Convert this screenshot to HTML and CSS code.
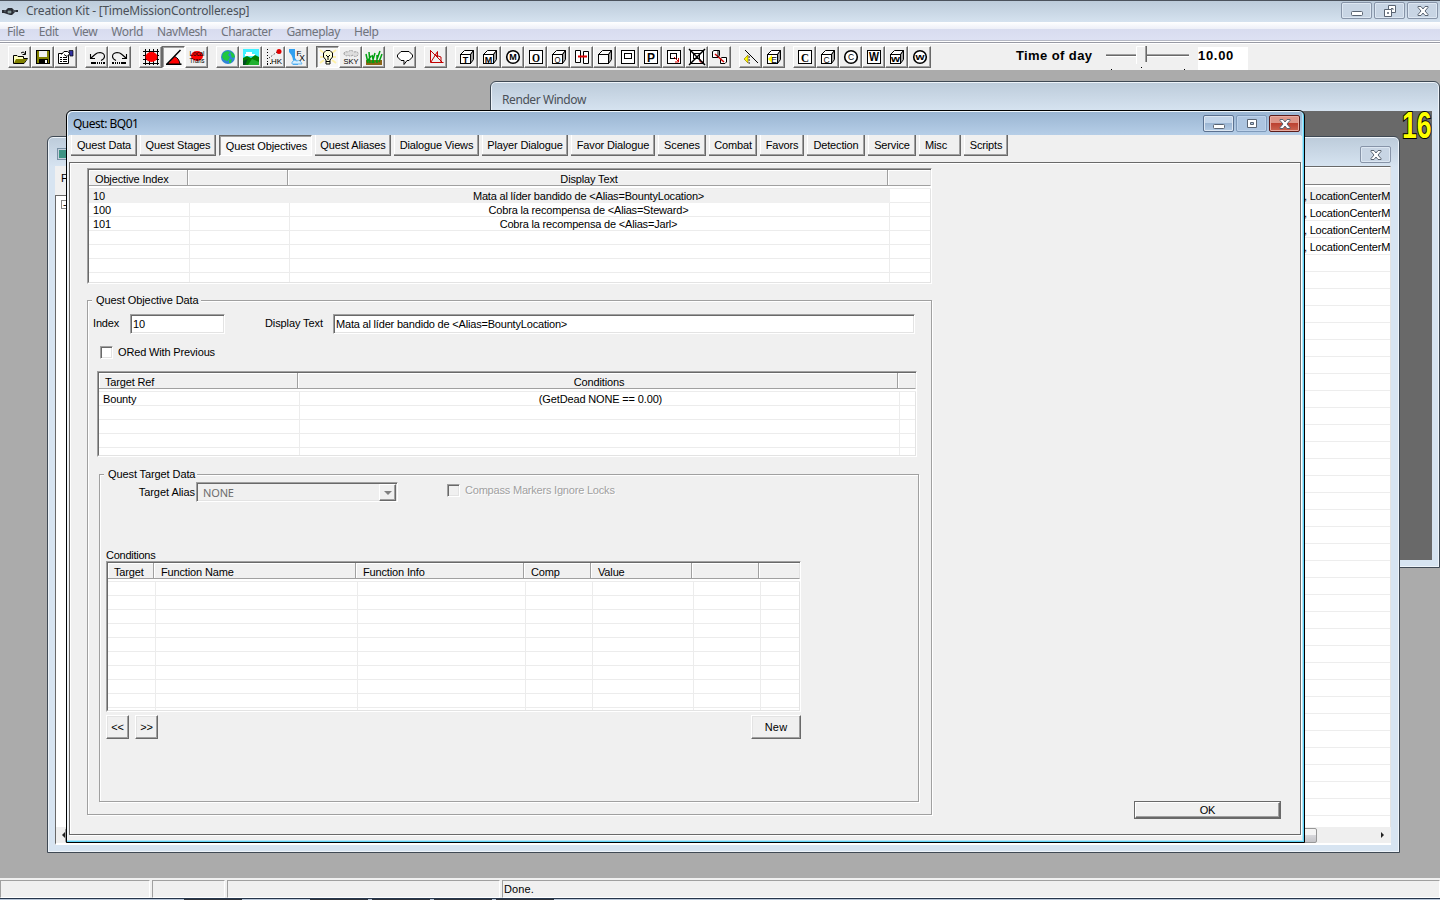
FILE: index.html
```html
<!DOCTYPE html>
<html lang="en">

<head>
    <meta charset="utf-8">
    <title>Creation Kit</title>
    <link rel="stylesheet" href="styles.css">
</head>

<body>
    <svg class="defs" width="0" height="0">
        <symbol id="cube" viewBox="0 0 16 16">
            <path d="M1.5 5.5L5.5 1.5H14.5L11.5 5.5Z" fill="#fff" stroke="#000" />
            <path d="M11.5 5.5L14.5 1.5V10.5L11.5 14.5Z" fill="#a0a0a0" stroke="#000" />
            <rect x="1.5" y="5.5" width="10" height="9" fill="#fff" stroke="#000" />
        </symbol>
        <symbol id="square" viewBox="0 0 16 16">
            <rect x="1.5" y="1.5" width="13" height="13" fill="#fff" stroke="#000" />
        </symbol>
        <symbol id="circle" viewBox="0 0 16 16">
            <circle cx="8" cy="8" r="6.3" fill="#fff" stroke="#000" stroke-width="1.6" />
        </symbol>
        <symbol id="cross" viewBox="0 0 12 10">
            <path d="M1 .5H4L6 3L8 .5H11V1.5L8 5L11 8.5V9.5H8L6 7L4 9.5H1V8.5L4 5L1 1.5Z" fill="#fff" stroke="#5a6472" />
        </symbol>
        <symbol id="minimize" viewBox="0 0 12 10">
            <rect x=".5" y="5.5" width="11" height="4" rx="1" fill="#fff" stroke="#5a6472" />
        </symbol>
        <symbol id="maximize" viewBox="0 0 12 10">
            <path d="M1.5 .5H10.5V8.5H1.5ZM4.500 3.500V5.500H7.500V3.500Z" fill="#fff" fill-rule="evenodd" stroke="#5a6472" />
        </symbol>
        <symbol id="restore" viewBox="0 0 12 12">
            <path d="M4.500 .5H11.5V7.500H4.500Z" fill="#fff" stroke="#5a6472" />
            <path d="M7 3.500H9V5" fill="none" stroke="#5a6472" />
            <path d="M.5 4.500H7.500V11.5H.5ZM3.500 7.500V8.500H4.500V7.500Z" fill="#fff" fill-rule="evenodd" stroke="#5a6472" />
        </symbol>
    </svg>

    <header class="app-title">
        <svg class="app-icon" viewBox="0 0 16 10">
            <path d="M0 3H4L6 1H10L12 3H16V5H13L10 8H8L5 7L2 6H0Z" fill="#2b2f36" />
            <path d="M6 4H9V6H6ZM2 4H4M11 4H14" fill="#7f9a8c" stroke="#8c98a4" stroke-width=".6" />
        </svg>
        <span class="app-name">Creation Kit - [TimeMissionController.esp]</span>
        <div class="caption-buttons">
            <span class="caption-button"><svg width="12" height="10"><use href="#minimize" /></svg></span>
            <span class="caption-button"><svg width="12" height="12"><use href="#restore" /></svg></span>
            <span class="caption-button"><svg width="12" height="10"><use href="#cross" /></svg></span>
        </div>
    </header>

    <nav class="menu">
        <span>File</span><span>Edit</span><span>View</span><span>World</span><span>NavMesh</span><span>Character</span><span>Gameplay</span><span>Help</span>
    </nav>

    <div class="toolbar">
        <div class="tool-group">
            <span class="tool"><svg viewBox="0 0 16 16"><path d="M1.500 14.500V6.500H5L6 7.500H11.500V9.500H15.500L12 14.500Z" fill="#ffffc0" stroke="#000" /><path d="M4 10H15L12 14H2Z" fill="#808000" /><path d="M9 4Q11 1.500 13.500 5M13.500 2V5.500H10.500" fill="none" stroke="#000" /></svg></span>
            <span class="tool"><svg viewBox="0 0 16 16"><rect x="1.500" y="1.500" width="13" height="13" fill="#808000" stroke="#000" /><rect x="4" y="2" width="8" height="6" fill="#f0f0f0" /><rect x="4" y="10" width="9" height="4" fill="#000" /><rect x="10" y="11" width="2" height="3" fill="#fff" /></svg></span>
            <span class="tool"><svg viewBox="0 0 16 16"><path d="M.5 4.500H10.500V14.500H.5Z" fill="#fff" stroke="#000" /><path d="M2 8.500H4M5 8.500H9M2 10.500H4M5 10.500H9M2 12.500H4M5 12.500H9" stroke="#000" /><path d="M3.500 5.500L6 2.500H9.500L12 4.500L9 7.500L6 5.500" fill="#fff" stroke="#000" /><path d="M11 1.500H15V7H12Z" fill="#3030a0" stroke="#000" stroke-width=".7" /></svg></span>
        </div>
        <div class="tool-group">
            <span class="tool"><svg viewBox="0 0 16 16"><path d="M1.500 5V9.500H6M1.500 9.500L6 5.500Q8 3.500 11 3.500Q15.500 4 15.500 7.500Q15.500 10 12 11.500" fill="none" stroke="#000" stroke-width="1.100" /><path d="M2 14H7M8 14H9M10 14H11M12 14H13M14 14H16" stroke="#000" stroke-width="2" /></svg></span>
            <span class="tool"><svg viewBox="0 0 16 16"><path d="M14.500 5V9.500H10M14.500 9.500L10 5.500Q8 3.500 5 3.500Q.5 4 .5 7.500Q.5 10 4 11.500" fill="none" stroke="#000" stroke-width="1.100" /><path d="M0 14H2M3 14H4M5 14H6M7 14H8M9 14H14" stroke="#000" stroke-width="2" /></svg></span>
        </div>
        <div class="tool-group">
            <span class="tool"><svg viewBox="0 0 16 16"><path d="M2.500 0V16M6.500 0V16M10.500 0V16M14.500 0V16M0 2.500H16M0 6.500H16M0 10.500H16M0 14.500H16" stroke="#000" /><ellipse cx="8.500" cy="8" rx="6" ry="5" fill="#f00" /></svg></span>
            <span class="tool pressed"><svg viewBox="0 0 16 16"><path d="M2 15L8.500 7.500Q13 9 14 15Z" fill="#f00" /><path d="M8.500 7.500Q13 9 14 15" fill="none" stroke="#000" /><path d="M0 15.300H15.500M1 15L14.500 1" stroke="#000" stroke-width="1.500" /></svg></span>
            <span class="tool"><svg viewBox="0 0 16 16"><ellipse cx="8" cy="7" rx="6" ry="5" fill="#f00" /><text x="8" y="6.500" class="tiny" textLength="15" lengthAdjust="spacingAndGlyphs">Local</text><text x="8" y="14" class="tiny" textLength="15" lengthAdjust="spacingAndGlyphs">Trans</text></svg></span>
        </div>
        <div class="tool-group">
            <span class="tool"><svg viewBox="0 0 16 16"><circle cx="8" cy="8" r="7" fill="#2f84d8" /><path d="M3 4L7 2L10 3L8 6L10 8L8 12L4 11L2 8ZM10 2L14 5L15 8L12 9L11 6ZM9 11L12 10L11 14H9Z" fill="#20c840" /></svg></span>
            <span class="tool"><svg viewBox="0 0 16 16"><rect width="16" height="16" fill="#40f0ff" /><path d="M3 3H9V5H12V7H2V5H3Z" fill="#fff" /><path d="M0 9L4 7L8 9L12 6L16 8V16H0Z" fill="#008000" /><path d="M5 16L9 10L16 13V16Z" fill="#20b030" /><path d="M0 12L5 10L2 16H0Z" fill="#004c20" /></svg></span>
            <span class="tool"><svg viewBox="0 0 16 16"><path d="M1.500 0V16M1 14.500H5M3 9L11 3" stroke="#000" stroke-dasharray="1 2" /><circle cx="13" cy="2.500" r="2.500" fill="#e00000" /><text x="10.500" y="14.500" class="small">HK</text></svg></span>
            <span class="tool"><svg viewBox="0 0 16 16"><path d="M0 0H6V9L9 13V16H4Q5 8 0 3Z" fill="#30a0f0" /><path d="M3 13Q5 10 8 12Q11 10 13 15H3Z" fill="#d8f0ff" stroke="#68b8f0" /><text x="10" y="6.500" class="small">F</text><text x="13" y="12" class="mid">X</text></svg></span>
        </div>
        <div class="tool-group">
            <span class="tool pressed"><svg viewBox="0 0 16 16"><path d="M0 1L4 4M16 1L12 4M0 14L4 11M16 14L12 11M0 8H3M16 8H13" stroke="#fff2a8" stroke-width="2" /><path d="M6 11L3.500 8V4L6 1.500H10L12.500 4V8L10 11V15H6Z" fill="#ffffd8" stroke="#000" /><path d="M6 6L8 8L10 6M8 8V11M6 12.500H10" fill="none" stroke="#000" /></svg></span>
            <span class="tool"><svg viewBox="0 0 16 16"><path d="M1 5Q1 2 5 3Q8 0 11 3Q16 2 15 6Q12 9 10 6Q7 8 5 6Q3 8 1 5Z" fill="#ddd" stroke="#999" stroke-dasharray="2 1" /><text x="8" y="15" class="small" textLength="15" lengthAdjust="spacingAndGlyphs">SKY</text></svg></span>
            <span class="tool"><svg viewBox="0 0 16 16"><path d="M0 11H16V16H0Z" fill="#8c6418" /><path d="M2 14L0 5M4 14L3 3M6 14L9 4M8 14L6 6M10 13L14 2M11 14L11 6M13 13L16 5M1 13L5 7" stroke="#00a010" stroke-width="1.500" /></svg></span>
        </div>
        <div class="tool-group">
            <span class="tool"><svg viewBox="0 0 16 16"><path d="M4 2.500H12L15.500 6V8L12 11.500H10L7 15.500V11.500H4L.5 8V6Z" fill="#fff" stroke="#000" /></svg></span>
        </div>
        <div class="tool-group">
            <span class="tool"><svg viewBox="0 0 16 16"><path d="M2.500 1V13.500H15.500M3 2L14 13M3 13L9.500 2.500V8.500M6 5.500L13 8V13" fill="none" stroke="#c00000" /></svg></span>
        </div>
        <div class="tool-group">
            <span class="tool"><svg viewBox="0 0 16 16"><use href="#cube" /><text x="6.500" y="13.500" class="bold">T</text></svg></span>
            <span class="tool"><svg viewBox="0 0 16 16"><use href="#cube" /><text x="6.500" y="13.500" class="bold">M</text></svg></span>
            <span class="tool"><svg viewBox="0 0 16 16"><use href="#circle" /><text x="8" y="11" class="bold">M</text></svg></span>
            <span class="tool"><svg viewBox="0 0 16 16"><use href="#square" /><text x="8" y="12.500" class="serif" textLength="8" lengthAdjust="spacingAndGlyphs">O</text></svg></span>
            <span class="tool"><svg viewBox="0 0 16 16"><use href="#cube" /><text x="6.500" y="13.500" class="mid" textLength="6" lengthAdjust="spacingAndGlyphs">O</text></svg></span>
            <span class="tool"><svg viewBox="0 0 16 16"><path d="M1.500 1.500H6.500V13.500H1.500ZM9.500 2.500H14.500V14.500H9.500Z" fill="#fff" stroke="#000" /><path d="M4 7.500H13" stroke="#e00000" stroke-width="2" /></svg></span>
            <span class="tool"><svg viewBox="0 0 16 16"><use href="#cube" /></svg></span>
            <span class="tool"><svg viewBox="0 0 16 16"><use href="#square" /><rect x="4.500" y="4.500" width="7" height="5" fill="#fff" stroke="#000" /></svg></span>
            <span class="tool"><svg viewBox="0 0 16 16"><use href="#square" /><text x="8" y="12.500" class="letter">P</text></svg></span>
            <span class="tool"><svg viewBox="0 0 16 16"><use href="#square" /><rect x="4.500" y="4.500" width="6" height="5" fill="#fff" stroke="#000" /><path d="M8 8L12 12M12.500 9V13H9" fill="none" stroke="#d00000" /></svg></span>
            <span class="tool"><svg viewBox="0 0 16 16"><use href="#square" /><rect x="4.500" y="4.500" width="6" height="5" fill="#fff" stroke="#000" /><path d="M11 10V13H14" fill="none" stroke="#d00000" /><path d="M0 0L16 16M16 0L0 16" stroke="#000" stroke-width="1.500" /></svg></span>
            <span class="tool"><svg viewBox="0 0 16 16"><path d="M.5 2.500L2 1.500H7.500V6.500L6 8.500H.5ZM8.500 9.500L10 8.500H14.500V13L13 14.500H8.500Z" fill="#fff" stroke="#000" /><path d="M3 5L12 13" stroke="#d00000" stroke-width="1.500" /><path d="M6 2V8" stroke="#000" /></svg></span>
        </div>
        <div class="tool-group">
            <span class="tool"><svg viewBox="0 0 16 16"><path d="M2 1L15 14" stroke="#000" /><path d="M1 10L5 6V14Z" fill="#ff0" stroke="#806000" stroke-width=".6" /><path d="M5.500 8H7M5.500 11H7M5.500 14H7" stroke="#000" /></svg></span>
            <span class="tool"><svg viewBox="0 0 16 16"><use href="#cube" /><path d="M2 10L6 6V14Z" fill="#ff0" /><text x="8" y="13.500" class="mid">E</text></svg></span>
        </div>
        <div class="tool-group">
            <span class="tool"><svg viewBox="0 0 16 16"><use href="#square" /><text x="8" y="12.500" class="serif" textLength="8" lengthAdjust="spacingAndGlyphs">C</text></svg></span>
            <span class="tool"><svg viewBox="0 0 16 16"><use href="#cube" /><text x="6.500" y="13.500" class="mid">C</text></svg></span>
            <span class="tool"><svg viewBox="0 0 16 16"><use href="#circle" /><text x="8" y="11" class="mid">C</text></svg></span>
            <span class="tool"><svg viewBox="0 0 16 16"><use href="#square" /><text x="8" y="12" class="letter" textLength="10" lengthAdjust="spacingAndGlyphs">W</text></svg></span>
            <span class="tool"><svg viewBox="0 0 16 16"><use href="#cube" /><text x="6.500" y="13" class="bold" textLength="9" lengthAdjust="spacingAndGlyphs">w</text></svg></span>
            <span class="tool"><svg viewBox="0 0 16 16"><use href="#circle" /><text x="8" y="10.500" class="bold" textLength="9" lengthAdjust="spacingAndGlyphs">w</text></svg></span>
        </div>
        <span class="time-label">Time of day</span>
        <svg class="slider" width="84" height="24" viewBox="0 0 84 24">
            <path d="M0 9.500H83" stroke="#696969" />
            <path d="M0 8.500H83" stroke="#a0a0a0" />
            <path d="M0 10.500H83" stroke="#fff" />
            <path d="M30 0H40V18L35 22L30 18Z" fill="#f0f0f0" />
            <path d="M30.500 18V.5H39" fill="none" stroke="#fff" />
            <path d="M39.500 0V16" stroke="#a0a0a0" />
            <path d="M40.500 0V16" stroke="#696969" />
            <path d="M5.500 23V24M78.500 23V24M35.500 21V22" stroke="#000" />
        </svg>
        <span class="time-value">10.00</span>
    </div>

    <main class="desktop">
        <section class="window render-window">
            <div class="window-title">Render Window</div>
            <div class="viewport"><span class="fps">16</span></div>
        </section>

        <section class="window object-window">
            <div class="object-title">
                <span class="object-icon"></span>
                <span class="caption-button"><svg width="12" height="10"><use href="#cross" /></svg></span>
            </div>
            <div class="object-body">
                <div class="tree-side">
                    <span class="tree-label">F</span>
                    <div class="tree"><span class="expander">-</span></div>
                </div>
                <div class="object-list">
                    <div class="object-list-header"></div>
                    <div class="object-row selected">, LocationCenterM</div>
                    <div class="object-row">, LocationCenterM</div>
                    <div class="object-row">, LocationCenterM</div>
                    <div class="object-row">, LocationCenterM</div>
                </div>
            </div>
            <div class="scrollbar">
                <span class="arrow left"></span>
                <span class="thumb"></span>
                <span class="arrow right"></span>
            </div>
        </section>

        <section class="window quest-window">
            <div class="quest-title">
                <span>Quest: BQ01</span>
                <div class="caption-buttons">
                    <span class="caption-button active"><svg width="12" height="10"><use href="#minimize" /></svg></span>
                    <span class="caption-button active dim"><svg width="12" height="10"><use href="#maximize" /></svg></span>
                    <span class="caption-button close"><svg width="12" height="10"><use href="#cross" /></svg></span>
                </div>
            </div>
            <div class="quest-client">
                <div class="tabs">
                    <span class="tab w66">Quest Data</span>
                    <span class="tab w76">Quest Stages</span>
                    <span class="tab w93 current">Quest Objectives</span>
                    <span class="tab w76">Quest Aliases</span>
                    <span class="tab w85">Dialogue Views</span>
                    <span class="tab w86">Player Dialogue</span>
                    <span class="tab w84">Favor Dialogue</span>
                    <span class="tab w48">Scenes</span>
                    <span class="tab w48">Combat</span>
                    <span class="tab w44">Favors</span>
                    <span class="tab w58">Detection</span>
                    <span class="tab w48">Service</span>
                    <span class="tab w42 start">Misc</span>
                    <span class="tab w44">Scripts</span>
                </div>
                <div class="panel">
                    <div class="objectives">
                        <div class="list objective-list">
                            <div class="list-header">
                                <span>Objective Index</span><span></span><span class="center">Display Text</span><span></span>
                            </div>
                            <div class="list-body">
                                <div class="row selected"><span>10</span><span></span><span class="center">Mata al líder bandido de &lt;Alias=BountyLocation&gt;</span><span></span></div>
                                <div class="row"><span>100</span><span></span><span class="center">Cobra la recompensa de &lt;Alias=Steward&gt;</span><span></span></div>
                                <div class="row"><span>101</span><span></span><span class="center">Cobra la recompensa de &lt;Alias=Jarl&gt;</span><span></span></div>
                            </div>
                        </div>

                        <fieldset class="objective-data">
                            <legend>Quest Objective Data</legend>
                            <div class="fields">
                                <span class="index-label">Index</span>
                                <div class="input index-input">10</div>
                                <span class="text-label">Display Text</span>
                                <div class="input text-input">Mata al líder bandido de &lt;Alias=BountyLocation&gt;</div>
                            </div>
                            <div class="check ored"><span class="box"></span>ORed With Previous</div>
                            <div class="list target-list">
                                <div class="list-header">
                                    <span>Target Ref</span><span class="center">Conditions</span><span></span>
                                </div>
                                <div class="list-body">
                                    <div class="row"><span>Bounty</span><span class="center">(GetDead NONE == 0.00)</span><span></span></div>
                                </div>
                            </div>

                            <fieldset class="target-data">
                                <legend>Quest Target Data</legend>
                                <div class="alias-row">
                                    <span class="alias-label">Target Alias</span>
                                    <div class="combo"><span>NONE</span><span class="drop"></span></div>
                                    <div class="check disabled"><span class="box"></span>Compass Markers Ignore Locks</div>
                                </div>
                                <div class="conditions-label">Conditions</div>
                                <div class="list condition-list">
                                    <div class="list-header">
                                        <span>Target</span><span>Function Name</span><span>Function Info</span><span>Comp</span><span>Value</span><span></span><span></span>
                                    </div>
                                    <div class="list-body"></div>
                                </div>
                                <div class="condition-buttons">
                                    <span class="button arrows">&lt;&lt;</span>
                                    <span class="button arrows">&gt;&gt;</span>
                                    <span class="button new">New</span>
                                </div>
                            </fieldset>
                        </fieldset>
                    </div>
                    <span class="ok"><span class="ok-face">OK</span></span>
                </div>
            </div>
        </section>
    </main>

    <footer class="status">
        <span></span><span></span><span></span><span>Done.</span>
    </footer>
    <div class="taskbar"><i></i><i></i><i></i><i></i><i></i><i></i></div>

    <script>
        // pad the lists with blank rows so the grid lines reach the bottom
        const fillRows = () => {
            document.querySelectorAll('.list').forEach(list => {
                const columns = list.querySelector('.list-header').children.length;
                const body = list.querySelector('.list-body');
                while (body.children.length < 10) {
                    const row = document.createElement('div');
                    row.setAttribute('class', 'row');
                    for (let i = 0; i < columns; i++) {
                        row.append(document.createElement('span'));
                    }
                    body.append(row);
                }
            });
        }
        fillRows();
    </script>
</body>

</html>
```

FILE: styles.css
```css
* {
    box-sizing: border-box;
}

body {
    margin: 0;
    width: 1440px;
    height: 900px;
    display: flex;
    flex-flow: column;
    background-color: #f0f0f0;
    color: #000;
    font-family: "Liberation Sans", Arial, sans-serif;
    font-size: 11px;
    line-height: 14px;
    letter-spacing: -0.15px;
    white-space: nowrap;
    overflow: hidden;
}

svg {
    display: block;
}

.defs {
    position: absolute;
}

/* main window */

.app-title {
    height: 22px;
    display: flex;
    align-items: center;
    padding: 0 2px 2px 2px;
    border-top: 1px solid #4b525c;
    background: linear-gradient(#bccbda, #d5e2ef);
    color: #4a5058;
    font-family: "Noto Sans", sans-serif;
    font-size: 12px;
}

.app-icon {
    width: 16px;
    height: 10px;
    margin-top: 2px;
}

.app-name {
    margin-left: 8px;
    letter-spacing: -0.22px;
}

.caption-buttons {
    display: flex;
    gap: 2px;
    margin-left: auto;
}

.caption-button {
    width: 31px;
    height: 17px;
    display: flex;
    justify-content: center;
    align-items: center;
    border: 1px solid #8794a8;
    border-radius: 2px;
    box-shadow: inset 0 0 0 1px #dde7f2;
    background-color: #c8d5e4;
}

.caption-button.active {
    border-color: #5b7190;
    background: linear-gradient(#c3d5ea 45%, #9cb6d3 50%, #b4cbe5);
}

.caption-button.dim {
    border-color: #7f9aba;
    background: #adc5e0;
    box-shadow: inset 0 0 0 1px #bdd2ea;
}

.caption-button.close {
    border-color: #5c1d1a;
    box-shadow: inset 0 0 0 1px #e8aca2;
    background: linear-gradient(#dd9588 45%, #bc4231 50%, #cb6552);
}

.menu {
    height: 22px;
    display: flex;
    gap: 14.1px;
    padding: 3px 7px 0;
    background: linear-gradient(#fff 0, #eef0f8 30%, #d8dcef 34%, #dde1f3 80%, #b5b8c4 82%, #b5b8c4 86%, #fff 87%, #fff 91%, #989aa4 92%, #989aa4 96%, #fff 97%);
    color: #70747c;
    font-family: "Noto Sans", sans-serif;
    font-size: 12px;
    letter-spacing: -0.41px;
}

.toolbar {
    height: 26px;
    display: flex;
    padding: 2px 0 0 8px;
}

.tool-group {
    display: flex;
    margin-right: 8px;
}

.tool {
    width: 23px;
    height: 22px;
    padding: 2px 0 0 3px;
    border: 1px solid;
    border-color: #fff #696969 #696969 #fff;
    box-shadow: inset -1px -1px #a0a0a0;
}

.tool.pressed {
    border-color: #696969 #fff #fff #696969;
    box-shadow: inset 1px 1px #a0a0a0;
    background-color: #f8f8f8;
}

.tool svg {
    width: 16px;
    height: 16px;
    overflow: visible;
}

.tool text {
    font-family: "Liberation Sans", Arial, sans-serif;
    letter-spacing: 0;
    text-anchor: middle;
}

.tool .tiny {
    font-size: 7px;
}

.tool .small {
    font-size: 8px;
}

.tool .mid {
    font-size: 8.5px;
}

.tool .bold {
    font-size: 9px;
    font-weight: 700;
}

.tool .letter {
    font-size: 12px;
    font-weight: 700;
}

.tool .serif {
    font-family: "Liberation Serif", serif;
    font-size: 13px;
    font-weight: 700;
}

.time-label {
    width: 90px;
    margin: 3px 0 0 77px;
    font-size: 13px;
    font-weight: 700;
    letter-spacing: 0.4px;
}

.time-value {
    width: 50px;
    height: 23px;
    margin: 1px 0 0 8px;
    padding-top: 2px;
    background-color: #fff;
    font-size: 13px;
    font-weight: 700;
    letter-spacing: 0.7px;
}

/* child windows */

.desktop {
    position: relative;
    height: 808px;
    background-color: #ababab;
    overflow: hidden;
}

.window {
    position: absolute;
    display: flex;
    flex-flow: column;
    border: 1px solid #3f4954;
    border-radius: 6px 6px 0 0;
    background-color: #d7e4f1;
    box-shadow: inset 0 0 0 1px #eef4fa;
}

.render-window {
    left: 490px;
    top: 11px;
    width: 950px;
    height: 487px;
    padding: 0 7px 7px;
    background: linear-gradient(#bccbda, #d7e4f1 30px);
}

.window-title {
    height: 29px;
    padding: 11px 0 0 4px;
    color: #4a5058;
    font-family: "Noto Sans", sans-serif;
    font-size: 12px;
    letter-spacing: -0.42px;
}

.viewport {
    flex: 1;
    display: flex;
    justify-content: flex-end;
    background-color: #696969;
}

.fps {
    width: 30px;
    height: 30px;
    color: #ff0;
    font-size: 36px;
    font-weight: 700;
    line-height: 30px;
    letter-spacing: 0;
    transform: scaleX(0.74);
    transform-origin: 0 0;
    -webkit-text-stroke: 2px #000;
    paint-order: stroke fill;
}

.object-window {
    left: 47px;
    top: 66px;
    width: 1353px;
    height: 717px;
    padding: 0 8px 7px 7px;
    background: linear-gradient(#bccbda, #d7e4f1 30px);
}

.object-title {
    height: 29px;
    display: flex;
    justify-content: space-between;
    padding: 9px 0 0 2px;
}

.object-icon {
    width: 12px;
    height: 12px;
    margin-top: 2px;
    border: 2px solid #c4d0dc;
    outline: 1px solid #7890a4;
    outline-offset: -1px;
    background-color: #3c9484;
}

.object-body {
    flex: 1;
    display: flex;
    min-height: 0;
    background-color: #f0f0f0;
}

.tree-side {
    width: 30px;
    display: flex;
    flex-flow: column;
}

.tree-label {
    height: 29px;
    padding: 5px 0 0 6px;
}

.tree {
    flex: 1;
    padding: 4px 0 0 5px;
    border-left: 1px solid #696969;
    border-top: 1px solid #696969;
    background-color: #fff;
}

.expander {
    display: block;
    width: 9px;
    height: 9px;
    border: 1px solid #888;
    line-height: 6px;
    padding-left: 1px;
}

.object-list {
    flex: 1;
    border-top: 1px solid #696969;
    border-right: 1px solid #e3e3e3;
    background: repeating-linear-gradient(#fff 0 16px, #ededed 16px 17px) 0 3px;
    overflow: hidden;
}

.object-list-header {
    height: 18px;
    border-top: 1px solid #fff;
    border-bottom: 1px solid #808080;
    background-color: #f0f0f0;
}

.object-row {
    height: 17px;
    padding: 3px 0 0 1219px;
    letter-spacing: -0.22px;
}

.object-row.selected {
    height: 18px;
    padding-top: 2px;
    border-top: 2px solid #fff;
    background-color: #f0f0f0;
}

.scrollbar {
    height: 18px;
    display: flex;
    align-items: center;
    border-left: 1px solid #696969;
    border-bottom: 2px solid #fff;
    background-color: #efefef;
}

.thumb {
    width: 1252px;
    height: 15px;
    border: 1px solid #979797;
    border-radius: 2px;
    background: linear-gradient(#f4f4f4 45%, #d6d6da 50%, #c4c4c8);
}

.arrow {
    width: 0;
    height: 0;
    border: 3.5px solid transparent;
}

.arrow.left {
    margin-left: 3px;
    border-right-color: #222;
}

.arrow.right {
    margin-left: 64px;
    border-left-color: #222;
}

/* quest dialog */

.quest-window {
    left: 66px;
    top: 40px;
    width: 1239px;
    height: 733px;
    padding: 0 1px 1px 2px;
    border-color: #000;
    background: linear-gradient(#99b4d1, #b7cfe8 25px, #f0f0f0 25px);
    box-shadow: inset -1px -1px #5fd2f5, inset -2px -2px #b4e6f6, inset 1px 1px #eef6fc;
}

.quest-title {
    height: 24px;
    display: flex;
    padding: 4px 3px 0 4px;
    font-family: "Noto Sans", sans-serif;
    font-size: 12px;
    line-height: 17px;
    letter-spacing: -0.5px;
}

.quest-client {
    flex: 1;
    display: flex;
    flex-flow: column;
    margin-right: 2px;
    margin-bottom: 6px;
    background-color: #f0f0f0;
}

.tabs {
    height: 27px;
    display: flex;
    gap: 3px;
    padding-left: 2px;
}

.tab {
    height: 21px;
    display: flex;
    justify-content: center;
    padding: 3px 0 0 1px;
    border: solid #696969;
    border-width: 0 1px 1px 0;
    box-shadow: inset -1px -1px #a0a0a0, inset 1px 0 #fff;
}

.tab.current {
    padding: 3px 0 0 2px;
    border: 1px solid;
    border-color: #696969 #fff #fff #696969;
    box-shadow: inset 1px 1px #a0a0a0;
    background-color: #f8f8f8;
}

.tab.start {
    justify-content: flex-start;
    padding-left: 6px;
}

.w42 { width: 42px; }
.w44 { width: 44px; }
.w48 { width: 48px; }
.w58 { width: 58px; }
.w66 { width: 66px; }
.w76 { width: 76px; }
.w84 { width: 84px; }
.w85 { width: 85px; }
.w86 { width: 86px; }
.w93 { width: 93px; }

.panel {
    flex: 1;
    display: flex;
    justify-content: space-between;
    padding: 5px 19px 15px 17px;
    border: 1px solid #696969;
    box-shadow: inset 1px 1px #fff, 1px 1px #fff;
}

.list {
    border: 1px solid;
    border-color: #a0a0a0 #fff #fff #a0a0a0;
    background-color: #fff;
    overflow: hidden;
    display: flex;
    flex-flow: column;
}

.list-header {
    flex: none;
    height: 17px;
    display: flex;
    padding-left: 1px;
    border-top: 1px solid #696969;
    background: linear-gradient(90deg, #696969 1px, #f0f0f0 1px);
}

.list-header span {
    flex: none;
    padding: 2px 6px 0 7px;
    border: solid #a0a0a0;
    border-width: 0 1px 1px 0;
    box-shadow: inset 1px 1px #fff;
}

.list-header span:first-child {
    padding-left: 6px;
}

.list-header span:last-child,
.row span:last-child {
    flex: 1;
    border-right-color: #e3e3e3;
}

.list-body {
    flex: 1;
    padding-top: 2px;
    border-left: 1px solid #696969;
    border-bottom: 1px solid #e3e3e3;
    overflow: hidden;
}

.row {
    height: 14px;
    display: flex;
    line-height: 15px;
    border-top: 1px solid #ececec;
}

.row span {
    flex: none;
    height: 14px;
    padding: 0 4px;
    border-right: 1px solid #ececec;
}

.row.selected span:not(:last-child) {
    border-color: #f0f0f0;
    background-color: #f0f0f0;
}

.list .center {
    padding-left: 6px;
    text-align: center;
}

.list-header .center {
    padding-left: 9px;
}

.objective-list {
    width: 845px;
    height: 116px;
}

.objective-list .list-header span:nth-child(1) { width: 99px; }
.objective-list .row span:nth-child(1) { width: 101px; }
.objective-list span:nth-child(2) { width: 100px; }
.objective-list span:nth-child(3) { width: 600px; }

.objective-list .row .center {
    padding-left: 2px;
    letter-spacing: -0.19px;
}

.target-list {
    width: 820px;
    height: 86px;
    margin: 12px 0 0 9px;
}

.target-list .list-header span:nth-child(1) { width: 199px; }
.target-list .row span:nth-child(1) { width: 201px; }
.target-list span:nth-child(2) { width: 600px; }

.condition-list {
    width: 695px;
    height: 151px;
    margin-left: 6px;
}

.condition-list .list-header span:nth-child(1) { width: 46px; }
.condition-list .row span:nth-child(1) { width: 48px; }
.condition-list span:nth-child(2) { width: 202px; }
.condition-list span:nth-child(3) { width: 168px; }
.condition-list span:nth-child(4) { width: 67px; }
.condition-list span:nth-child(5) { width: 101px; }
.condition-list span:nth-child(6) { width: 67px; }

fieldset {
    min-width: 0;
    margin: 0;
    padding: 0;
    border: 1px solid #a0a0a0;
    box-shadow: 1px 1px #fff, inset 1px 1px #fff;
}

legend {
    height: 14px;
    margin-left: 4px;
    padding: 0 2px 0 4px;
    background-color: #f0f0f0;
    letter-spacing: -0.1px;
}

.objective-data {
    width: 845px;
    height: 522px;
    margin-top: 9px;
}

.fields {
    display: flex;
    margin: 7px 0 0 5px;
    line-height: 19px;
}

.input {
    height: 20px;
    padding-left: 1px;
    border: 1px solid;
    border-color: #a0a0a0 #fff #fff #a0a0a0;
    box-shadow: inset 1px 1px #696969, inset -1px -1px #e3e3e3;
    background-color: #fff;
    text-indent: 1px;
}

.index-label { width: 37px; }
.index-input { width: 95px; }
.text-label { width: 68px; margin-left: 40px; letter-spacing: -0.1px; }
.text-input { width: 582px; letter-spacing: -0.19px; }

.check {
    display: flex;
    align-items: center;
    gap: 5px;
}

.box {
    width: 13px;
    height: 13px;
    border: 1px solid;
    border-color: #a0a0a0 #fff #fff #a0a0a0;
    box-shadow: inset 1px 1px #696969, inset -1px -1px #e3e3e3;
    background-color: #fff;
}

.ored {
    height: 14px;
    margin: 11px 0 0 12px;
}

.disabled {
    height: 14px;
    margin: 1px 0 0 49px;
    color: #a0a0a0;
    letter-spacing: -0.2px;
    text-shadow: 1px 1px #fff;
}

.disabled .box {
    background-color: #f0f0f0;
}

.target-data {
    width: 820px;
    height: 335px;
    margin: 10px 0 0 11px;
}

.alias-row {
    display: flex;
    margin-top: 1px;
}

.alias-label {
    width: 96px;
    padding: 3px 1px 0 0;
    letter-spacing: -0.05px;
    text-align: right;
}

.combo {
    width: 202px;
    height: 20px;
    display: flex;
    justify-content: space-between;
    padding: 1px 1px 1px 6px;
    border: 1px solid;
    border-color: #a0a0a0 #fff #fff #a0a0a0;
    box-shadow: inset 1px 1px #696969, inset -1px -1px #e3e3e3;
    color: #6d6d6d;
    font-family: "Noto Sans", sans-serif;
    line-height: 18px;
}

.drop {
    width: 17px;
    height: 17px;
    padding: 6px 0 0 4px;
    border: 1px solid;
    border-color: #fff #696969 #696969 #fff;
    box-shadow: inset -1px -1px #a0a0a0;
}

.drop::before {
    content: "";
    display: block;
    width: 0;
    border: 4px solid transparent;
    border-top-color: #808080;
    border-bottom: 0;
}

.conditions-label {
    height: 13px;
    margin: 46px 0 0 6px;
    letter-spacing: -0.25px;
}

.condition-buttons {
    width: 695px;
    display: flex;
    gap: 6px;
    margin: 3px 0 0 6px;
}

.button {
    height: 24px;
    border: 1px solid;
    border-color: #fff #696969 #696969 #fff;
    box-shadow: inset -1px -1px #a0a0a0, inset 1px 1px #e3e3e3;
    line-height: 22px;
    text-align: center;
}

.arrows {
    width: 23px;
}

.new {
    width: 50px;
    margin-left: auto;
    letter-spacing: 0.2px;
}

.ok {
    align-self: flex-end;
    width: 147px;
    height: 18px;
    border: 1px solid #696969;
}

.ok-face {
    display: block;
    height: 16px;
    border: 1px solid;
    border-color: #fff #696969 #696969 #fff;
    box-shadow: inset -1px -1px #a0a0a0;
    line-height: 15px;
    text-align: center;
}

/* status bar */

.status {
    height: 20px;
    display: flex;
    gap: 2px;
    padding-top: 2px;
}

.status span {
    padding-top: 1px;
    border: 1px solid;
    border-color: #a0a0a0 #fff #fff #a0a0a0;
    letter-spacing: 0.1px;
}

.status span:nth-child(1) { width: 150px; }
.status span:nth-child(2) { width: 73px; }
.status span:nth-child(3) { width: 273px; }
.status span:nth-child(4) { flex: 1; padding-left: 1px; }

.taskbar {
    height: 2px;
    display: flex;
    gap: 4px;
    padding-left: 184px;
    border-top: 1px solid #26364c;
    background-color: #b9c7d9;
}

.taskbar i {
    width: 58px;
    background-color: #30343c;
}

.taskbar i:nth-child(2) {
    width: 60px;
    background-color: #b9c7d9;
}
```
